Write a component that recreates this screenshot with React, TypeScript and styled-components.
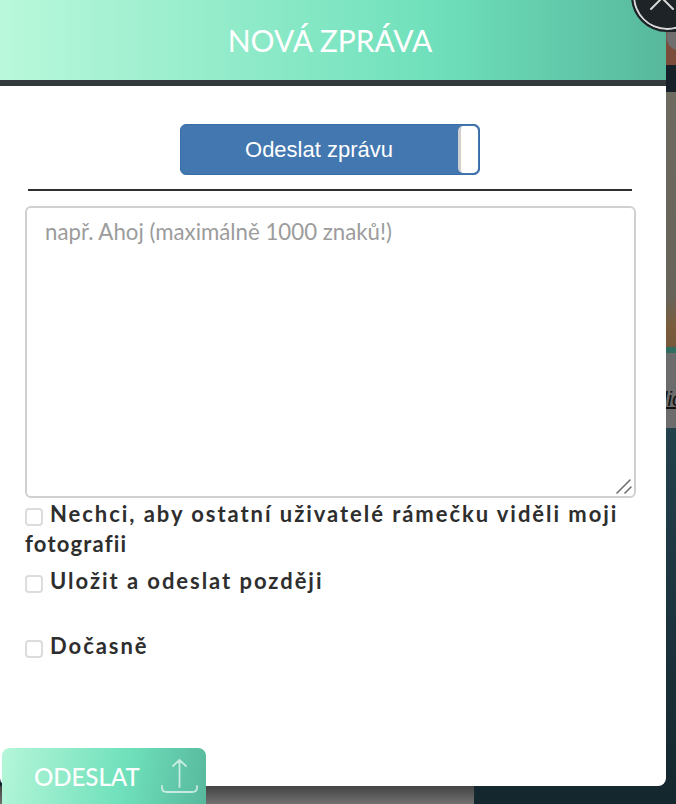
import React from 'react';
import styled, { createGlobalStyle } from 'styled-components';

const GlobalStyle = createGlobalStyle`
  html, body {
    margin: 0;
    padding: 0;
    background: #fff;
  }
  body {
    font-family: Lato, "Noto Sans", sans-serif;
  }
`;

const Page = styled.div`
  position: relative;
  width: 676px;
  height: 804px;
  overflow: hidden;
`;

// the dimmed page behind the dialog
const Backdrop = styled.div`
  position: absolute;
  inset: 0;
  display: flex;
  flex-direction: column;
  background: linear-gradient(180deg, #24424f 50%, #14262e 100%);
`;

const BackdropRight = styled.div`
  align-self: flex-end;
  width: 10px;
  height: 428px;
  display: flex;
  flex-direction: column;
  overflow: hidden;
`;

const Strip = styled.div<{ $height: number; $bg: string }>`
  height: ${({ $height }) => $height}px;
  background: ${({ $bg }) => $bg};
  flex-shrink: 0;
`;

const SideText = styled.div`
  height: 75px;
  flex-shrink: 0;
  background: #6c6c6c;
  color: #111;
  font-family: "Liberation Sans", sans-serif;
  font-style: italic;
  font-size: 20px;
  line-height: 92px;
  text-decoration: underline;
  white-space: nowrap;
  text-indent: -3px;
`;

const BackdropBottom = styled.div`
  margin-top: auto;
  width: 474px;
  height: 18px;
  background: linear-gradient(180deg, #444 0%, #707070 100%);
`;

const Modal = styled.div`
  position: relative;
  width: 666px;
  height: 786px;
  background: #fff;
  border-radius: 0 0 8px 8px;
  display: flex;
  flex-direction: column;
`;

const Header = styled.div`
  height: 80px;
  padding-right: 6px;
  border-bottom: 6px solid #333a3b;
  background: linear-gradient(90deg, #b9f8db 0%, #6fe0bb 65%, #57b89c 100%);
  display: flex;
  align-items: center;
  justify-content: center;
  color: #fff;
  font-size: 30px;
  font-weight: 400;
`;

const Body = styled.div`
  display: flex;
  flex-direction: column;
  padding: 38px 31px 0 25px;
`;

const Toggle = styled.div`
  align-self: center;
  box-sizing: border-box;
  width: 300px;
  height: 51px;
  background: #4377b0;
  border: 1px solid #3a6ea8;
  border-radius: 6px;
  display: flex;
  align-items: stretch;
`;

const ToggleLabel = styled.div`
  flex: 1;
  display: flex;
  align-items: center;
  justify-content: center;
  color: #fff;
  font-family: "Liberation Sans", Arial, sans-serif;
  font-size: 22px;
`;

const ToggleHandle = styled.div`
  width: 20px;
  margin: 1px;
  box-sizing: border-box;
  background: #fff;
  border-left: 3px solid #cfcfcf;
  border-radius: 5px;
`;

const Rule = styled.hr`
  width: 604px;
  height: 2px;
  margin: 14px 0 15px 3px;
  border: none;
  background: #2e2e2e;
`;

const Field = styled.div`
  position: relative;
  width: 611px;
  height: 292px;
`;

const MessageInput = styled.textarea`
  box-sizing: border-box;
  display: block;
  width: 100%;
  height: 100%;
  padding: 10px 18px;
  border: 2px solid #d0d0d0;
  border-radius: 6px;
  outline: none;
  color: #333;
  font-family: Lato, sans-serif;
  font-size: 22.25px;
  line-height: 28px;
  resize: none;

  &::placeholder {
    color: #9c9c9c;
    opacity: 1;
  }
`;

const Grip = styled.svg`
  position: absolute;
  right: 4px;
  bottom: 4px;
  pointer-events: none;
`;

const Options = styled.div`
  display: flex;
  flex-direction: column;
  margin-top: 1px;
`;

const Option = styled.label<{ $gap?: number }>`
  display: block;
  margin-top: ${({ $gap }) => $gap ?? 0}px;
  color: #2e2e2e;
  font-size: 22px;
  font-weight: 700;
  line-height: 30px;
  letter-spacing: 1.95px;
`;

const TightWord = styled.span`
  letter-spacing: 1.2px;
`;

const Check = styled.span`
  display: inline-block;
  box-sizing: border-box;
  width: 18px;
  height: 18px;
  margin-right: 7px;
  vertical-align: -4px;
  border: 2px solid #dcdcdc;
  border-radius: 4px;
  background: #fff;
`;

const CloseButton = styled.button`
  position: absolute;
  left: 631px;
  top: -40px;
  box-sizing: border-box;
  width: 72px;
  height: 72px;
  padding: 0;
  border: 2px solid #1d2326;
  border-radius: 50%;
  background: #1d2326;
  box-shadow: inset 0 0 0 2px #d8d8d8;
  display: flex;
  align-items: center;
  justify-content: center;
`;

const SendButton = styled.button`
  position: absolute;
  left: 2px;
  top: 748px;
  box-sizing: border-box;
  width: 204px;
  height: 56px;
  padding: 0 8px 0 32px;
  border: none;
  border-radius: 8px 8px 0 0;
  background: linear-gradient(100deg, #b5f6d9 0%, #6fe0bb 60%, #57b89c 100%);
  color: #fff;
  font-family: Lato, sans-serif;
  font-size: 24px;
  font-weight: 500;
  display: flex;
  align-items: center;
  justify-content: space-between;
`;

const App: React.FC = () => {
  return (
    <Page>
      <GlobalStyle />
      <Backdrop>
        <BackdropRight>
          <Strip $height={32} $bg="#1d2326" />
          <Strip $height={33} $bg="radial-gradient(circle at 14px 5px, #6e6e6e 0 13px, #7b4c3a 14px)" />
          <Strip $height={27} $bg="#152029" />
          <Strip $height={255} $bg="linear-gradient(180deg, #6d6a60 0%, #66635a 80%, #7a5c3c 92%, #75593a 100%)" />
          <Strip $height={6} $bg="#2f6d60" />
          <SideText>lic</SideText>
        </BackdropRight>
        <BackdropBottom />
      </Backdrop>

      <Modal>
        <Header>NOVÁ ZPRÁVA</Header>
        <Body>
          <Toggle>
            <ToggleLabel>Odeslat zprávu</ToggleLabel>
            <ToggleHandle />
          </Toggle>
          <Rule />
          <Field>
            <MessageInput placeholder="např. Ahoj (maximálně 1000 znaků!)" />
            <Grip width="16" height="15" viewBox="0 0 16 15" fill="none" stroke="#6e6e6e" strokeWidth="1.6" strokeLinecap="round">
              <path d="M1 14 L14 1" />
              <path d="M9 14 L15 8" />
            </Grip>
          </Field>
          <Options>
            <Option>
              <Check />
              Nechci, aby ostatní uživatelé rámečku viděli moji <TightWord>fotografii</TightWord>
            </Option>
            <Option $gap={7}>
              <Check />
              Uložit a odeslat později
            </Option>
            <Option $gap={35}>
              <Check />
              Dočasně
            </Option>
          </Options>
        </Body>
      </Modal>

      <CloseButton aria-label="Zavřít">
        <svg width="68" height="68" viewBox="0 0 68 68" fill="none">
          <path d="M18 47 L40 25 M40 47 L18 25" stroke="#d8d8d8" strokeWidth="2" strokeLinecap="round" />
        </svg>
      </CloseButton>

      <SendButton>
        ODESLAT
        <svg width="37" height="36" viewBox="0 0 37 36" fill="none" stroke="#fff" strokeOpacity="0.65" strokeWidth="1.8" strokeLinecap="round" strokeLinejoin="round">
          <path d="M18.5 2 V29 M12 8 L18.5 2 L25 8" />
          <path d="M1 28 V30 Q1 34 6 34 H31 Q36 34 36 30 V28" />
        </svg>
      </SendButton>
    </Page>
  );
};

export default App;
